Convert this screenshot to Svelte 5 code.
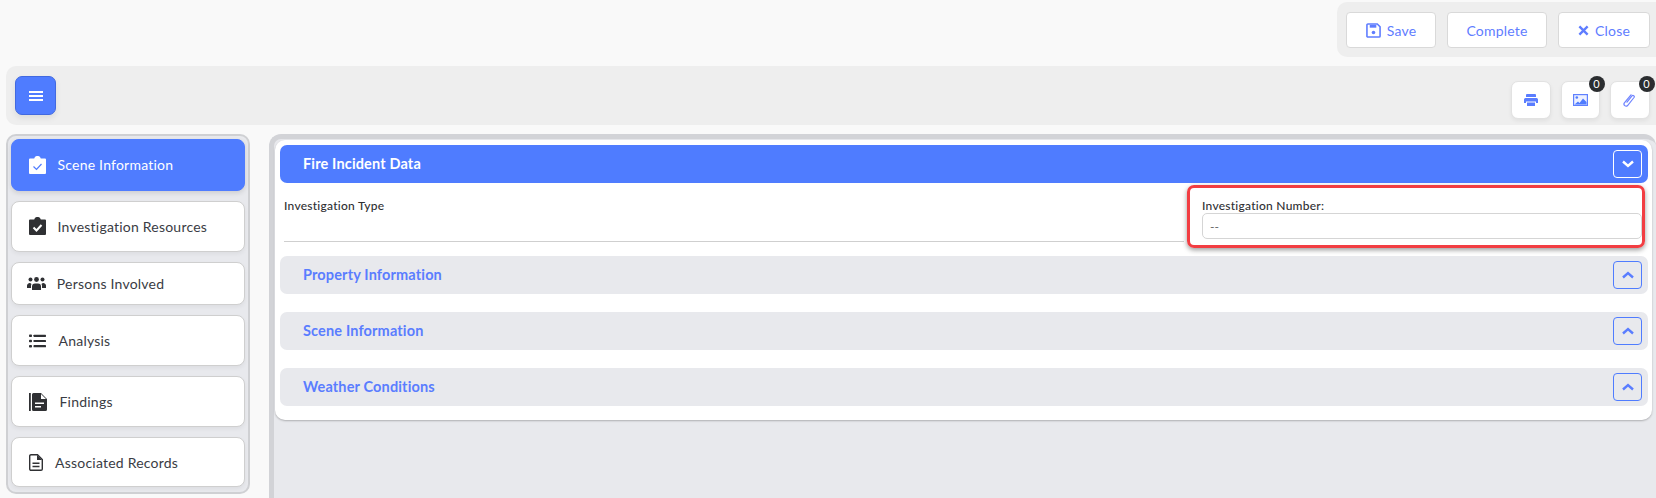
<script>
  const tabs = [
    { label: 'Scene Information', icon: 'clipWhite', h: 51.7, gap: 12 },
    { label: 'Investigation Resources', icon: 'clip', h: 51, gap: 12 },
    { label: 'Persons Involved', icon: 'users', h: 43.6, gap: 11 },
    { label: 'Analysis', icon: 'list', h: 51, gap: 13 },
    { label: 'Findings', icon: 'book', h: 51, gap: 13 },
    { label: 'Associated Records', icon: 'file', h: 50, gap: 12.500 }
  ];
  const sections = ['Property Information', 'Scene Information', 'Weather Conditions'];
</script>

<div class="page">
  <div class="top">
    <div class="actions">
      <button class="act save">
        <svg width="15" height="15" viewBox="0 0 16 16"><path fill="none" stroke="currentColor" stroke-width="1.700" d="M2 1h10l3 3v10a1 1 0 0 1-1 1H2a1 1 0 0 1-1-1V2a1 1 0 0 1 1-1z"/><path fill="currentColor" d="M4 2h7v3H4z"/><circle cx="8" cy="10.200" r="1.900" fill="currentColor"/></svg>
        Save
      </button>
      <button class="act complete">Complete</button>
      <button class="act close">
        <svg width="11" height="11" viewBox="0 0 12 12"><path stroke="currentColor" stroke-width="2.600" d="M1.500 1.500l9 9M10.500 1.500l-9 9"/></svg>
        Close
      </button>
    </div>
  </div>

  <div class="toolbar">
    <button class="menu" aria-label="menu">
      <svg width="14" height="12" viewBox="0 0 14 12"><path fill="#fff" d="M0 1h14v2H0zM0 5h14v2H0zM0 9h14v2H0z"/></svg>
    </button>
    <div class="tools">
      <button class="tool" aria-label="print">
        <svg width="14" height="12" viewBox="0 0 14 12"><path fill="#5a7dff" d="M3 0h8a1 1 0 0 1 1 1v2H2V1a1 1 0 0 1 1-1zM1.500 4h11A1.500 1.500 0 0 1 14 5.500V9h-2V7.500H2V9H0V5.500A1.500 1.500 0 0 1 1.500 4zM3 8.500h8V12H3z"/></svg>
      </button>
      <button class="tool img" aria-label="images">
        <svg width="15" height="12" viewBox="0 0 15 12"><rect x=".6" y=".6" width="13.800" height="10.800" fill="#eef1ff" stroke="#5f80ff" stroke-width="1.200"/><circle cx="3.800" cy="3.500" r="1.300" fill="#4f7cff"/><path fill="#4f7cff" d="M1.500 10.500l3.500-3 1.500 1.500L10 4.500l3.500 3.500v2.500z"/></svg>
        <span class="badge">0</span>
      </button>
      <button class="tool" aria-label="attachments">
        <svg width="13" height="14" viewBox="0 0 13 14"><path fill="none" stroke="#6f84ff" stroke-width="1.200" stroke-linecap="round" d="M4 9.200l5-6.200a1.200 1.200 0 0 1 2 1.500L4.600 12.500a2.100 2.100 0 0 1-3.200-2.700L8 1.800"/></svg>
        <span class="badge">0</span>
      </button>
    </div>
  </div>

  <div class="body">
    <nav class="side">
      {#each tabs as t, i}
        <div class="tab" class:active={i === 0} style="height: {t.h}px; gap: {t.gap}px">
          <span class="ico" class:wide={t.icon === 'users'}>
            {#if t.icon === 'clipWhite' || t.icon === 'clip'}
              <svg width="17" height="18" viewBox="0 0 17 18"><path fill={i === 0 ? '#fff' : '#2f3033'} d="M1 2.500h4.200a3.400 3.400 0 0 1 6.600 0H16a1 1 0 0 1 1 1V17a1 1 0 0 1-1 1H1a1 1 0 0 1-1-1V3.500a1 1 0 0 1 1-1z"/><path fill="none" stroke={i === 0 ? '#4f7cff' : '#fff'} stroke-width={i === 0 ? 1.200 : 2} d="M4.500 10.500l3 3 5-5.500"/></svg>
            {:else if t.icon === 'users'}
              <svg width="19" height="13" viewBox="0 0 19 13"><g fill="#2f3033"><circle cx="3.500" cy="2.500" r="2"/><circle cx="9.500" cy="2.500" r="2.400"/><circle cx="15.500" cy="2.500" r="2"/><path d="M0 11V8.500a2.500 2.500 0 0 1 4.500-1.500A4 4 0 0 0 4 9.500V11zM5 13V9.500a3 3 0 0 1 3-3h3a3 3 0 0 1 3 3V13zM19 11V8.500a2.500 2.500 0 0 0-4.500-1.500 4 4 0 0 1 .5 2.500V11z"/></g></svg>
            {:else if t.icon === 'list'}
              <svg width="17" height="14" viewBox="0 0 17 14"><g fill="#2f3033"><rect x="0" y="0.500" width="3" height="2.600" rx=".8"/><rect x="0" y="5.700" width="3" height="2.600" rx=".8"/><rect x="0" y="10.900" width="3" height="2.600" rx=".8"/><rect x="4.500" y="0.700" width="12.500" height="2.200" rx=".6"/><rect x="4.500" y="5.900" width="12.500" height="2.200" rx=".6"/><rect x="4.500" y="11.100" width="12.500" height="2.200" rx=".6"/></g></svg>
            {:else if t.icon === 'book'}
              <svg width="18" height="18" viewBox="0 0 18 18"><path fill="#2f3033" d="M0 0h1.800v18H0zM4.500 0H12l6 6v10.500a1.500 1.500 0 0 1-1.500 1.500h-12A1.500 1.500 0 0 1 3 16.500v-15A1.500 1.500 0 0 1 4.500 0z"/><path fill="#fff" d="M12 1v5h5zM6 9.500h9V11H6zM6 13h6v1.500H6z"/></svg>
            {:else}
              <svg width="14" height="17" viewBox="0 0 14 17"><path fill="none" stroke="#2f3033" stroke-width="1.400" d="M2 .7h6.500l4.800 4.800V15a1.300 1.300 0 0 1-1.300 1.300H2A1.300 1.300 0 0 1 .7 15V2A1.300 1.300 0 0 1 2 .7z"/><path fill="#2f3033" d="M8 1l5 5H8zM3.500 8.500h7v1.400h-7zM3.500 11.800h7v1.400h-7z"/></svg>
            {/if}
          </span>
          <span>{t.label}</span>
        </div>
      {/each}
    </nav>

    <main class="main">
      <div class="card">
        <div class="head open">
          <span>Fire Incident Data</span>
          <button class="toggle" aria-label="collapse">
            <svg width="12" height="8" viewBox="0 0 12 8"><path fill="none" stroke="currentColor" stroke-width="2.400" d="M1 1.500l5 4.500 5-4.500"/></svg>
          </button>
        </div>
        <div class="fields">
          <div class="left"><span class="label">Investigation Type</span></div>
          <div class="right">
            <span class="label">Investigation Number:</span>
            <div class="input">--</div>
            <div class="mark"></div>
          </div>
        </div>
        {#each sections as s}
          <div class="head">
            <span>{s}</span>
            <button class="toggle" aria-label="expand">
              <svg width="12" height="8" viewBox="0 0 12 8"><path fill="none" stroke="currentColor" stroke-width="2.400" d="M1 6.500l5-4.500 5 4.500"/></svg>
            </button>
          </div>
        {/each}
      </div>
    </main>
  </div>
</div>

<style>
  :global(body) {
    margin: 0;
    background: #f9f9f9;
    font-family: Lato, sans-serif;
  }

  .page {
    width: 1656px;
    height: 498px;
    overflow: hidden;
    box-sizing: border-box;
    color: #2f3033;
  }

  button {
    font-family: inherit;
    cursor: pointer;
  }

  .top {
    display: flex;
    justify-content: flex-end;
    padding-top: 2px;
  }

  .actions {
    width: 319px;
    height: 55px;
    box-sizing: border-box;
    display: flex;
    gap: 11px;
    padding: 10px 0 0 9px;
    background: #eee;
    border-radius: 10px 0 0 10px;
  }

  .act {
    height: 36px;
    display: flex;
    align-items: center;
    justify-content: center;
    gap: 6px;
    padding: 0;
    background: #fff;
    border: 1px solid #d9d9d9;
    border-radius: 4px;
    color: #5f7dff;
    font-size: 14px;
    letter-spacing: 0.2px;
  }

  .save { width: 90px; }
  .complete { width: 100px; }
  .close { width: 92px; }

  .toolbar {
    margin: 9px 0 0 6px;
    height: 59px;
    display: flex;
    justify-content: space-between;
    padding: 10px 6.500px 0 9px;
    box-sizing: border-box;
    background: #eee;
    border-radius: 10px 0 0 10px;
  }

  .menu {
    width: 41px;
    height: 39px;
    padding: 0;
    background: #4f7cff;
    border: 1px solid #4169e0;
    border-radius: 7px;
    box-shadow: 0 3px 6px rgba(0, 0, 0, 0.08);
    display: flex;
    align-items: center;
    justify-content: center;
  }

  .tools {
    display: flex;
    gap: 10px;
    padding-top: 4.500px;
  }

  .tool {
    position: relative;
    width: 40px;
    height: 38px;
    padding: 0;
    background: #fff;
    border: 1px solid #e2e2e2;
    border-radius: 7px;
    box-shadow: 0 2px 4px rgba(0, 0, 0, 0.06);
    display: flex;
    align-items: center;
    justify-content: center;
  }

  .tool.img {
    width: 39px;
  }

  .badge {
    position: absolute;
    top: -6px;
    right: -6px;
    width: 16px;
    height: 16px;
    border-radius: 50%;
    background: #2b2d30;
    color: #fff;
    font-size: 11px;
    line-height: 16px;
    text-align: center;
  }

  .body {
    display: flex;
    margin: 9px 0 0 6px;
    gap: 19px;
  }

  .side {
    width: 244px;
    height: 359.500px;
    box-sizing: border-box;
    display: flex;
    flex-direction: column;
    gap: 10px;
    padding: 3px;
    background: #e8e9ed;
    border: 2px solid #cfd0d3;
    border-radius: 10px;
  }

  .tab {
    display: flex;
    align-items: center;
    padding-left: 16.500px;
    box-sizing: border-box;
    background: #fff;
    border: 1px solid #cfcfcf;
    border-radius: 8px;
    box-shadow: 0 2px 4px rgba(0, 0, 0, 0.05);
    font-size: 14px;
    letter-spacing: 0.22px;
    color: #3a3c44;
  }

  .tab.active {
    background: #4f7cff;
    border-color: #4f7cff;
    color: #fff;
    box-shadow: 0 2px 5px rgba(0, 0, 0, 0.12);
  }

  .ico {
    display: flex;
  }

  .ico.wide {
    margin-left: -1.700px;
  }

  .main {
    flex: 1;
    height: 400px;
    background: #e8e9ed;
    border-left: 5px solid #d2d3d7;
    border-top: 5px solid #d2d3d7;
    border-radius: 12px 12px 0 0;
    box-sizing: border-box;
    padding: 1px 4px 0 1px;
  }

  .card {
    box-sizing: border-box;
    height: 280px;
    padding: 5px 4px 0 5px;
    background: #fff;
    border-radius: 10px;
    box-shadow: 0 1px 2px rgba(0, 0, 0, 0.25);
  }

  .head {
    height: 38px;
    margin-bottom: 18px;
    display: flex;
    align-items: center;
    justify-content: space-between;
    padding: 0 6px 0 23px;
    background: #e8e9ed;
    border-radius: 7px;
    color: #5a7dff;
    font-size: 14.500px;
    font-weight: 700;
    letter-spacing: 0.15px;
  }

  .head span {
    margin-top: -2px;
  }

  .head.open {
    margin-bottom: 0;
    background: #4f7cff;
    color: #fff;
  }

  .toggle {
    width: 29px;
    height: 28px;
    padding: 0;
    display: flex;
    align-items: center;
    justify-content: center;
    background: transparent;
    border: 1px solid #4f7cff;
    border-radius: 4px;
    color: #5a7dff;
  }

  .open .toggle {
    border-color: #fff;
    color: #fff;
  }

  .fields {
    display: flex;
    height: 73px;
    position: relative;
  }

  .left {
    width: 900px;
    margin-left: 4px;
    height: 59px;
    padding-top: 15px;
    box-sizing: border-box;
    border-bottom: 1px solid #cfcfcf;
  }

  .label {
    display: block;
    font-size: 12px;
    font-weight: 500;
    letter-spacing: 0.25px;
    color: #2f3033;
    line-height: 15px;
  }

  .right {
    position: relative;
    margin-left: 18px;
    width: 440px;
    padding-top: 15px;
  }

  .input {
    width: 440px;
    height: 26px;
    line-height: 26px;
    box-sizing: border-box;
    padding-left: 7px;
    background: #fff;
    border: 1px solid #d5d5d5;
    border-radius: 5px;
    font-size: 12px;
    color: #666;
  }

  .mark {
    position: absolute;
    left: -15px;
    top: 1.500px;
    width: 458px;
    height: 63px;
    box-sizing: border-box;
    border: 3px solid #f23d42;
    border-radius: 7px;
    box-shadow: 0 2px 5px rgba(0, 0, 0, 0.4);
  }
</style>
